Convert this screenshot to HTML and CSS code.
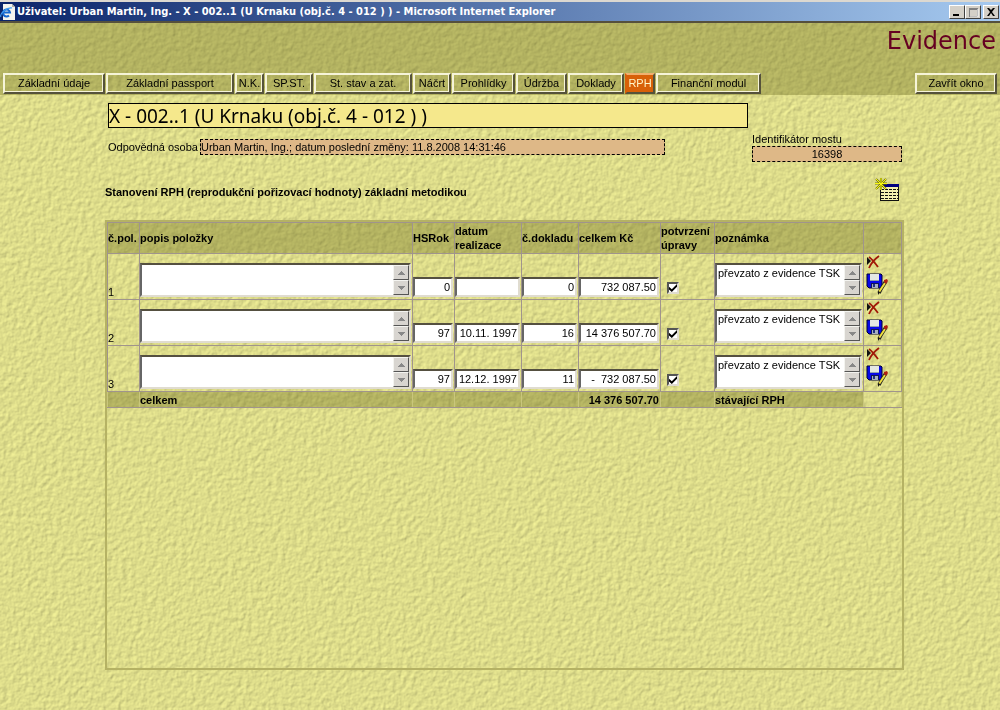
FILE: index.html
```html
<!DOCTYPE html>
<html lang="cs">
<head>
<meta charset="utf-8">
<title>Evidence</title>
<link rel="stylesheet" href="styles.css">
</head>
<body>
<svg class="texture" aria-hidden="true">
  <filter id="paper" x="0" y="0" width="100%" height="100%" color-interpolation-filters="sRGB">
    <feTurbulence type="fractalNoise" baseFrequency="0.2" numOctaves="4" seed="4" stitchTiles="stitch"/>
    <feDiffuseLighting surfaceScale="0.6" diffuseConstant="1.13" lighting-color="#dedd8b">
      <feDistantLight azimuth="225" elevation="62"/>
    </feDiffuseLighting>
  </filter>
  <rect width="100%" height="100%" filter="url(#paper)"/>
</svg>
<svg class="defs" aria-hidden="true">
  <symbol id="up" viewBox="0 0 7 4"><path d="M3 0h1v1h1v1h1v1h1v1H0V3h1V2h1V1h1z"/></symbol>
  <symbol id="down" viewBox="0 0 7 4"><path d="M0 0h7v1H6v1H5v1H4v1H3V3H2V2H1V1H0z"/></symbol>
  <symbol id="delete" viewBox="0 0 14 14">
    <path d="M1 2l4 4-4 4z" fill="#111"/>
    <path d="M3 2C6 4 9 8 12 12M13 1C9 4 5 8 3 13" fill="none" stroke="#a01808" stroke-width="1.8"/>
  </symbol>
  <symbol id="save" viewBox="0 0 22 22">
    <path d="M1 1h14l1 1v13H3l-2-2z" fill="#0808e8" stroke="#000038"/>
    <path d="M4 1h9v7H4z" fill="#e4e8e4"/><path d="M4 7h9v1H4z" fill="#90a0b0"/>
    <path d="M5 10h8v5H5z" fill="#111850"/><path d="M6 11h6v4H6z" fill="#a8b0c0"/><path d="M7 11h2v3H7z" fill="#203080"/>
    <path d="M20 8l-5 8-2 4" fill="none" stroke="#222" stroke-width="3.500"/>
    <path d="M19 10l-4 6-2 3" fill="none" stroke="#f0e040" stroke-width="2"/>
    <path d="M18 7l3-1 1 2-2 3-2-2z" fill="#b02010"/><path d="M12 18l2 1-2 3z" fill="#111"/>
  </symbol>
</svg>

<header class="titlebar">
  <svg class="ie" viewBox="0 0 16 16" aria-hidden="true">
    <path d="M3 0h9l3 3v13H3z" fill="#f4f4ee"/><path d="M12 0v3h3z" fill="#b0b0a8"/>
    <path d="M9 11.500A3.500 3.500 0 1 1 10 8.500H4" fill="none" stroke="#1668d0" stroke-width="2"/>
    <path d="M1 13C-1 10 7 3 12 4" fill="none" stroke="#3c9af0" stroke-width="1.200"/>
  </svg>
  <h1 class="caption">Uživatel: Urban Martin, Ing. - X - 002..1 (U Krnaku (obj.č. 4 - 012 ) ) - Microsoft Internet Explorer</h1>
  <div class="winbtns">
    <button class="winbtn" aria-label="Minimalizovat"><svg viewBox="0 0 12 10"><path d="M2 7h6v2H2z"/></svg></button>
    <button class="winbtn" aria-label="Maximalizovat"><svg viewBox="0 0 12 10"><path d="M2 1h9v9H2zM3 3v6h7V3z" fill="#808080" fill-rule="evenodd"/><path d="M11 2v8H3" stroke="#fff" fill="none"/></svg></button>
    <button class="winbtn close" aria-label="Zavřít"><svg viewBox="0 0 12 10"><path d="M2 1h2l2 2 2-2h2L7 5l3 4H8L6 6 4 9H2l3-4z"/></svg></button>
  </div>
</header>

<div class="banner">
  <p class="brand">Evidence</p>
  <nav class="tabs">
    <button class="tab w102">Základní údaje</button>
    <button class="tab w128">Základní passport</button>
    <button class="tab w29">N.K.</button>
    <button class="tab w48">SP.ST.</button>
    <button class="tab w98">St. stav a zat.</button>
    <button class="tab w38">Náčrt</button>
    <button class="tab w63">Prohlídky</button>
    <button class="tab w51">Údržba</button>
    <button class="tab w56">Doklady</button>
    <button class="tab w30 active">RPH</button>
    <button class="tab w105">Finanční modul</button>
    <button class="tab w82 exit">Zavřít okno</button>
  </nav>
</div>

<main class="page">
  <section class="info">
    <div class="left">
      <h2 class="object">X - 002..1 (U Krnaku (obj.č. 4 - 012 ) )</h2>
      <div class="person">
        <label for="osoba">Odpovědná osoba :</label>
        <input id="osoba" class="dashed" readonly value="Urban Martin, Ing.; datum poslední změny: 11.8.2008 14:31:46">
      </div>
    </div>
    <div class="ident">
      <label for="ident">Identifikátor mostu</label>
      <input id="ident" class="dashed center" readonly value="16398">
    </div>
  </section>

  <div class="heading">
    <h3>Stanovení RPH (reprodukční pořizovací hodnoty) základní metodikou</h3>
    <button class="icon" aria-label="Nová položka">
      <svg width="24" height="24" viewBox="0 0 24 24" aria-hidden="true">
        <path d="M5 7h19v16H5z" fill="#111"/><path d="M6 9h17v13H6z" fill="#f4f0b0"/><path d="M5 6h19v3H5z" fill="#000080"/>
        <path d="M6 11.500h17M6 14.500h17M6 17.500h17M6 20.500h17" stroke="#111" stroke-dasharray="3 1"/>
        <path d="M0 5.500h12M6 0v12M1 1l10 10M11 1L1 11" stroke="#77780c" stroke-width="2"/>
        <path d="M0 5.500h12M6 0v12M1 1l10 10M11 1L1 11" stroke="#f8f810"/>
      </svg>
    </button>
  </div>

  <section class="frame">
    <table class="items">
      <colgroup><col class="c-no"><col><col class="c-year"><col class="c-date"><col class="c-doc"><col class="c-sum"><col class="c-ok"><col class="c-note"><col class="c-act"></colgroup>
      <thead>
        <tr><th>č.pol.</th><th>popis položky</th><th>HSRok</th><th>datum<br>realizace</th><th>č.dokladu</th><th>celkem Kč</th><th>potvrzení<br>úpravy</th><th>poznámka</th><th></th></tr>
      </thead>
      <tbody>
        <tr>
          <td>1</td>
          <td><div class="area"><textarea aria-label="popis položky 1"></textarea><span class="scroll"><i><svg><use href="#up"/></svg></i><i><svg><use href="#down"/></svg></i></span></div></td>
          <td><input class="box" aria-label="HSRok 1" value="0"></td>
          <td><input class="box" aria-label="datum realizace 1" value=""></td>
          <td><input class="box" aria-label="č.dokladu 1" value="0"></td>
          <td><input class="box" aria-label="celkem Kč 1" value="732 087.50"></td>
          <td><input class="tick" type="checkbox" aria-label="potvrzení úpravy 1" checked></td>
          <td><div class="area"><textarea aria-label="poznámka 1">převzato z evidence TSK</textarea><span class="scroll"><i><svg><use href="#up"/></svg></i><i><svg><use href="#down"/></svg></i></span></div></td>
          <td class="actions"><button class="icon" aria-label="Smazat"><svg width="14" height="14"><use href="#delete"/></svg></button><button class="icon" aria-label="Uložit"><svg width="22" height="22"><use href="#save"/></svg></button></td>
        </tr>
        <tr>
          <td>2</td>
          <td><div class="area"><textarea aria-label="popis položky 2"></textarea><span class="scroll"><i><svg><use href="#up"/></svg></i><i><svg><use href="#down"/></svg></i></span></div></td>
          <td><input class="box" aria-label="HSRok 2" value="97"></td>
          <td><input class="box" aria-label="datum realizace 2" value="10.11. 1997"></td>
          <td><input class="box" aria-label="č.dokladu 2" value="16"></td>
          <td><input class="box" aria-label="celkem Kč 2" value="14 376 507.70"></td>
          <td><input class="tick" type="checkbox" aria-label="potvrzení úpravy 2" checked></td>
          <td><div class="area"><textarea aria-label="poznámka 2">převzato z evidence TSK</textarea><span class="scroll"><i><svg><use href="#up"/></svg></i><i><svg><use href="#down"/></svg></i></span></div></td>
          <td class="actions"><button class="icon" aria-label="Smazat"><svg width="14" height="14"><use href="#delete"/></svg></button><button class="icon" aria-label="Uložit"><svg width="22" height="22"><use href="#save"/></svg></button></td>
        </tr>
        <tr>
          <td>3</td>
          <td><div class="area"><textarea aria-label="popis položky 3"></textarea><span class="scroll"><i><svg><use href="#up"/></svg></i><i><svg><use href="#down"/></svg></i></span></div></td>
          <td><input class="box" aria-label="HSRok 3" value="97"></td>
          <td><input class="box" aria-label="datum realizace 3" value="12.12. 1997"></td>
          <td><input class="box" aria-label="č.dokladu 3" value="11"></td>
          <td><input class="box" aria-label="celkem Kč 3" value="-  732 087.50"></td>
          <td><input class="tick" type="checkbox" aria-label="potvrzení úpravy 3" checked></td>
          <td><div class="area"><textarea aria-label="poznámka 3">převzato z evidence TSK</textarea><span class="scroll"><i><svg><use href="#up"/></svg></i><i><svg><use href="#down"/></svg></i></span></div></td>
          <td class="actions"><button class="icon" aria-label="Smazat"><svg width="14" height="14"><use href="#delete"/></svg></button><button class="icon" aria-label="Uložit"><svg width="22" height="22"><use href="#save"/></svg></button></td>
        </tr>
      </tbody>
      <tfoot>
        <tr><td></td><td>celkem</td><td></td><td></td><td></td><td class="total">14 376 507.70</td><td></td><td>stávající RPH</td><td class="blank"></td></tr>
      </tfoot>
    </table>
  </section>
</main>
</body>
</html>
```
FILE: styles.css
```css
* { box-sizing: border-box; }
body {
  margin: 0;
  min-height: 100vh;
  display: flex;
  flex-direction: column;
  background: #dedd8a;
  color: #000;
  font: 11px/14px "Liberation Sans", Arial, sans-serif;
}
h1, h2, h3, p { margin: 0; font-weight: normal; }
button, input, textarea { font: inherit; color: inherit; margin: 0; border-radius: 0; }
svg { display: block; }
.texture { position: fixed; inset: 0; width: 100%; height: 100%; z-index: -1; }
.defs { position: absolute; width: 0; height: 0; }

.titlebar {
  height: 23px;
  display: flex;
  align-items: center;
  gap: 1px;
  border-top: 2px solid #dcd8d0;
  border-bottom: 2px solid #55503c;
  background: linear-gradient(90deg, #0a246a, #a6caf0);
}
.ie { width: 16px; height: 16px; flex: none; }
.caption { flex: 1; color: #fff; font: bold 11px/16px "DejaVu Sans Condensed", "DejaVu Sans", Tahoma, sans-serif; font-stretch: normal; white-space: nowrap; }
.winbtns { display: flex; padding-right: 1px; }
.winbtn {
  width: 16px;
  height: 14px;
  padding: 0;
  background: #d4d0c8;
  border: 1px solid;
  border-color: #fff #404040 #404040 #fff;
}
.winbtn svg { width: 12px; height: 10px; margin: auto; }
.close { margin-left: 2px; }

.banner { background: rgba(106, 106, 24, .36); }
.brand {
  height: 50px;
  padding: 2px 4px 0 0;
  text-align: right;
  color: #660022;
  font: 24px/32px "DejaVu Sans", Verdana, sans-serif;
}
.tabs { display: flex; gap: 1px; padding: 0 3px 1px; }
.tab {
  height: 21px;
  padding: 0 0 1px;
  background: none;
  border: 2px solid;
  border-color: #f6f4d8 #55523a #55523a #f6f4d8;
  box-shadow: inset -1px -1px #f6f4d8;
  text-align: center;
  white-space: nowrap;
}
.active { background: #d86008; color: #fff4c8; border-color: #f0b070 #55523a #55523a #d86008; box-shadow: none; }
.exit { margin-left: auto; }
.w29 { width: 29px; }
.w30 { width: 30px; }
.w38 { width: 38px; }
.w48 { width: 48px; }
.w51 { width: 51px; }
.w56 { width: 56px; }
.w63 { width: 63px; }
.w82 { width: 82px; }
.w98 { width: 98px; }
.w102 { width: 102px; }
.w105 { width: 105px; }
.w128 { width: 128px; }

.page { flex: 1; display: flex; flex-direction: column; padding: 8px 96px 40px 105px; }
.info { display: grid; grid-template-columns: 1fr 150px; gap: 4px; padding: 0 2px 0 3px; }
.object {
  height: 25px;
  border: 1px solid #000;
  background: #f5e88c;
  font: 19px/24px "Noto Sans", Tahoma, sans-serif;
  white-space: nowrap;
}
.person { display: flex; align-items: center; padding-top: 11px; }
.person label { width: 92px; white-space: nowrap; }
.dashed { height: 16px; padding: 0; border: 1px dashed #000; background: #deb887; }
.person .dashed { flex: 0 1 465px; }
.center { width: 100%; text-align: center; }
.ident { display: flex; flex-direction: column; padding-top: 29px; }

.heading { display: flex; justify-content: space-between; align-items: center; padding: 16px 5px 18px 0; }
.heading h3 { padding-top: 4px; font-size: 11px; font-weight: bold; }
.icon { display: block; padding: 0; border: 0; background: none; }

.frame { flex: 1; border: 2px solid #b5b264; }
.items { width: 100%; table-layout: fixed; border-collapse: collapse; border: 1px solid #a0948c; }
.items th, .items td { padding: 0; border: 1px solid #a0948c; text-align: left; vertical-align: bottom; }
.items th { height: 31px; vertical-align: middle; white-space: nowrap; }
.items th, .items tfoot td { background: rgba(106, 106, 24, .36); font-weight: bold; }
.items tbody tr { height: 46px; }
.items tfoot td { height: 16px; border-left-color: #c9c67c; border-right-color: #c9c67c; }
.items tfoot .blank { background: none; }
.items tfoot .total { text-align: right; padding-right: 1px; }
.c-no { width: 32px; }
.c-year { width: 42px; }
.c-date { width: 67px; }
.c-doc { width: 57px; }
.c-sum { width: 82px; }
.c-ok { width: 54px; }
.c-note { width: 149px; }
.c-act { width: 38px; }
.area, .box {
  background: #fff;
  border: 2px solid;
  border-color: #555040 #e0dcd0 #e0dcd0 #666;
}
.area { display: flex; height: 34px; margin: 0 1px 2px 0; }
.area textarea { flex: 1; min-width: 0; padding: 1px; border: 0; background: none; resize: none; overflow: hidden; line-height: 14px; white-space: nowrap; }
.scroll { width: 16px; display: flex; flex-direction: column; }
.scroll i {
  flex: 1;
  display: flex;
  align-items: center;
  justify-content: center;
  background: #d8d5d0;
  border: 1px solid;
  border-color: #f4f4f0 #555 #555 #f4f4f0;
}
.scroll svg { width: 7px; height: 4px; fill: #888; }
.box { display: block; width: calc(100% - 1px); height: 20px; margin-bottom: 2px; padding: 0 1px; text-align: right; white-space: pre; }
.tick {
  display: block;
  appearance: none;
  position: relative;
  width: 12px;
  height: 12px;
  margin: 0 0 5px 6px;
  background: #fff;
  border: 2px solid;
  border-color: #555 #e0dcd0 #e0dcd0 #555;
}
.tick:checked::after { content: ""; position: absolute; inset: 0; background: #000; clip-path: polygon(0 35%, 35% 65%, 100% 0, 100% 35%, 35% 100%, 0 70%); }
.items .actions { vertical-align: top; padding: 1px 0 0 2px; }
.actions .icon + .icon { margin-top: 4px; }
```
